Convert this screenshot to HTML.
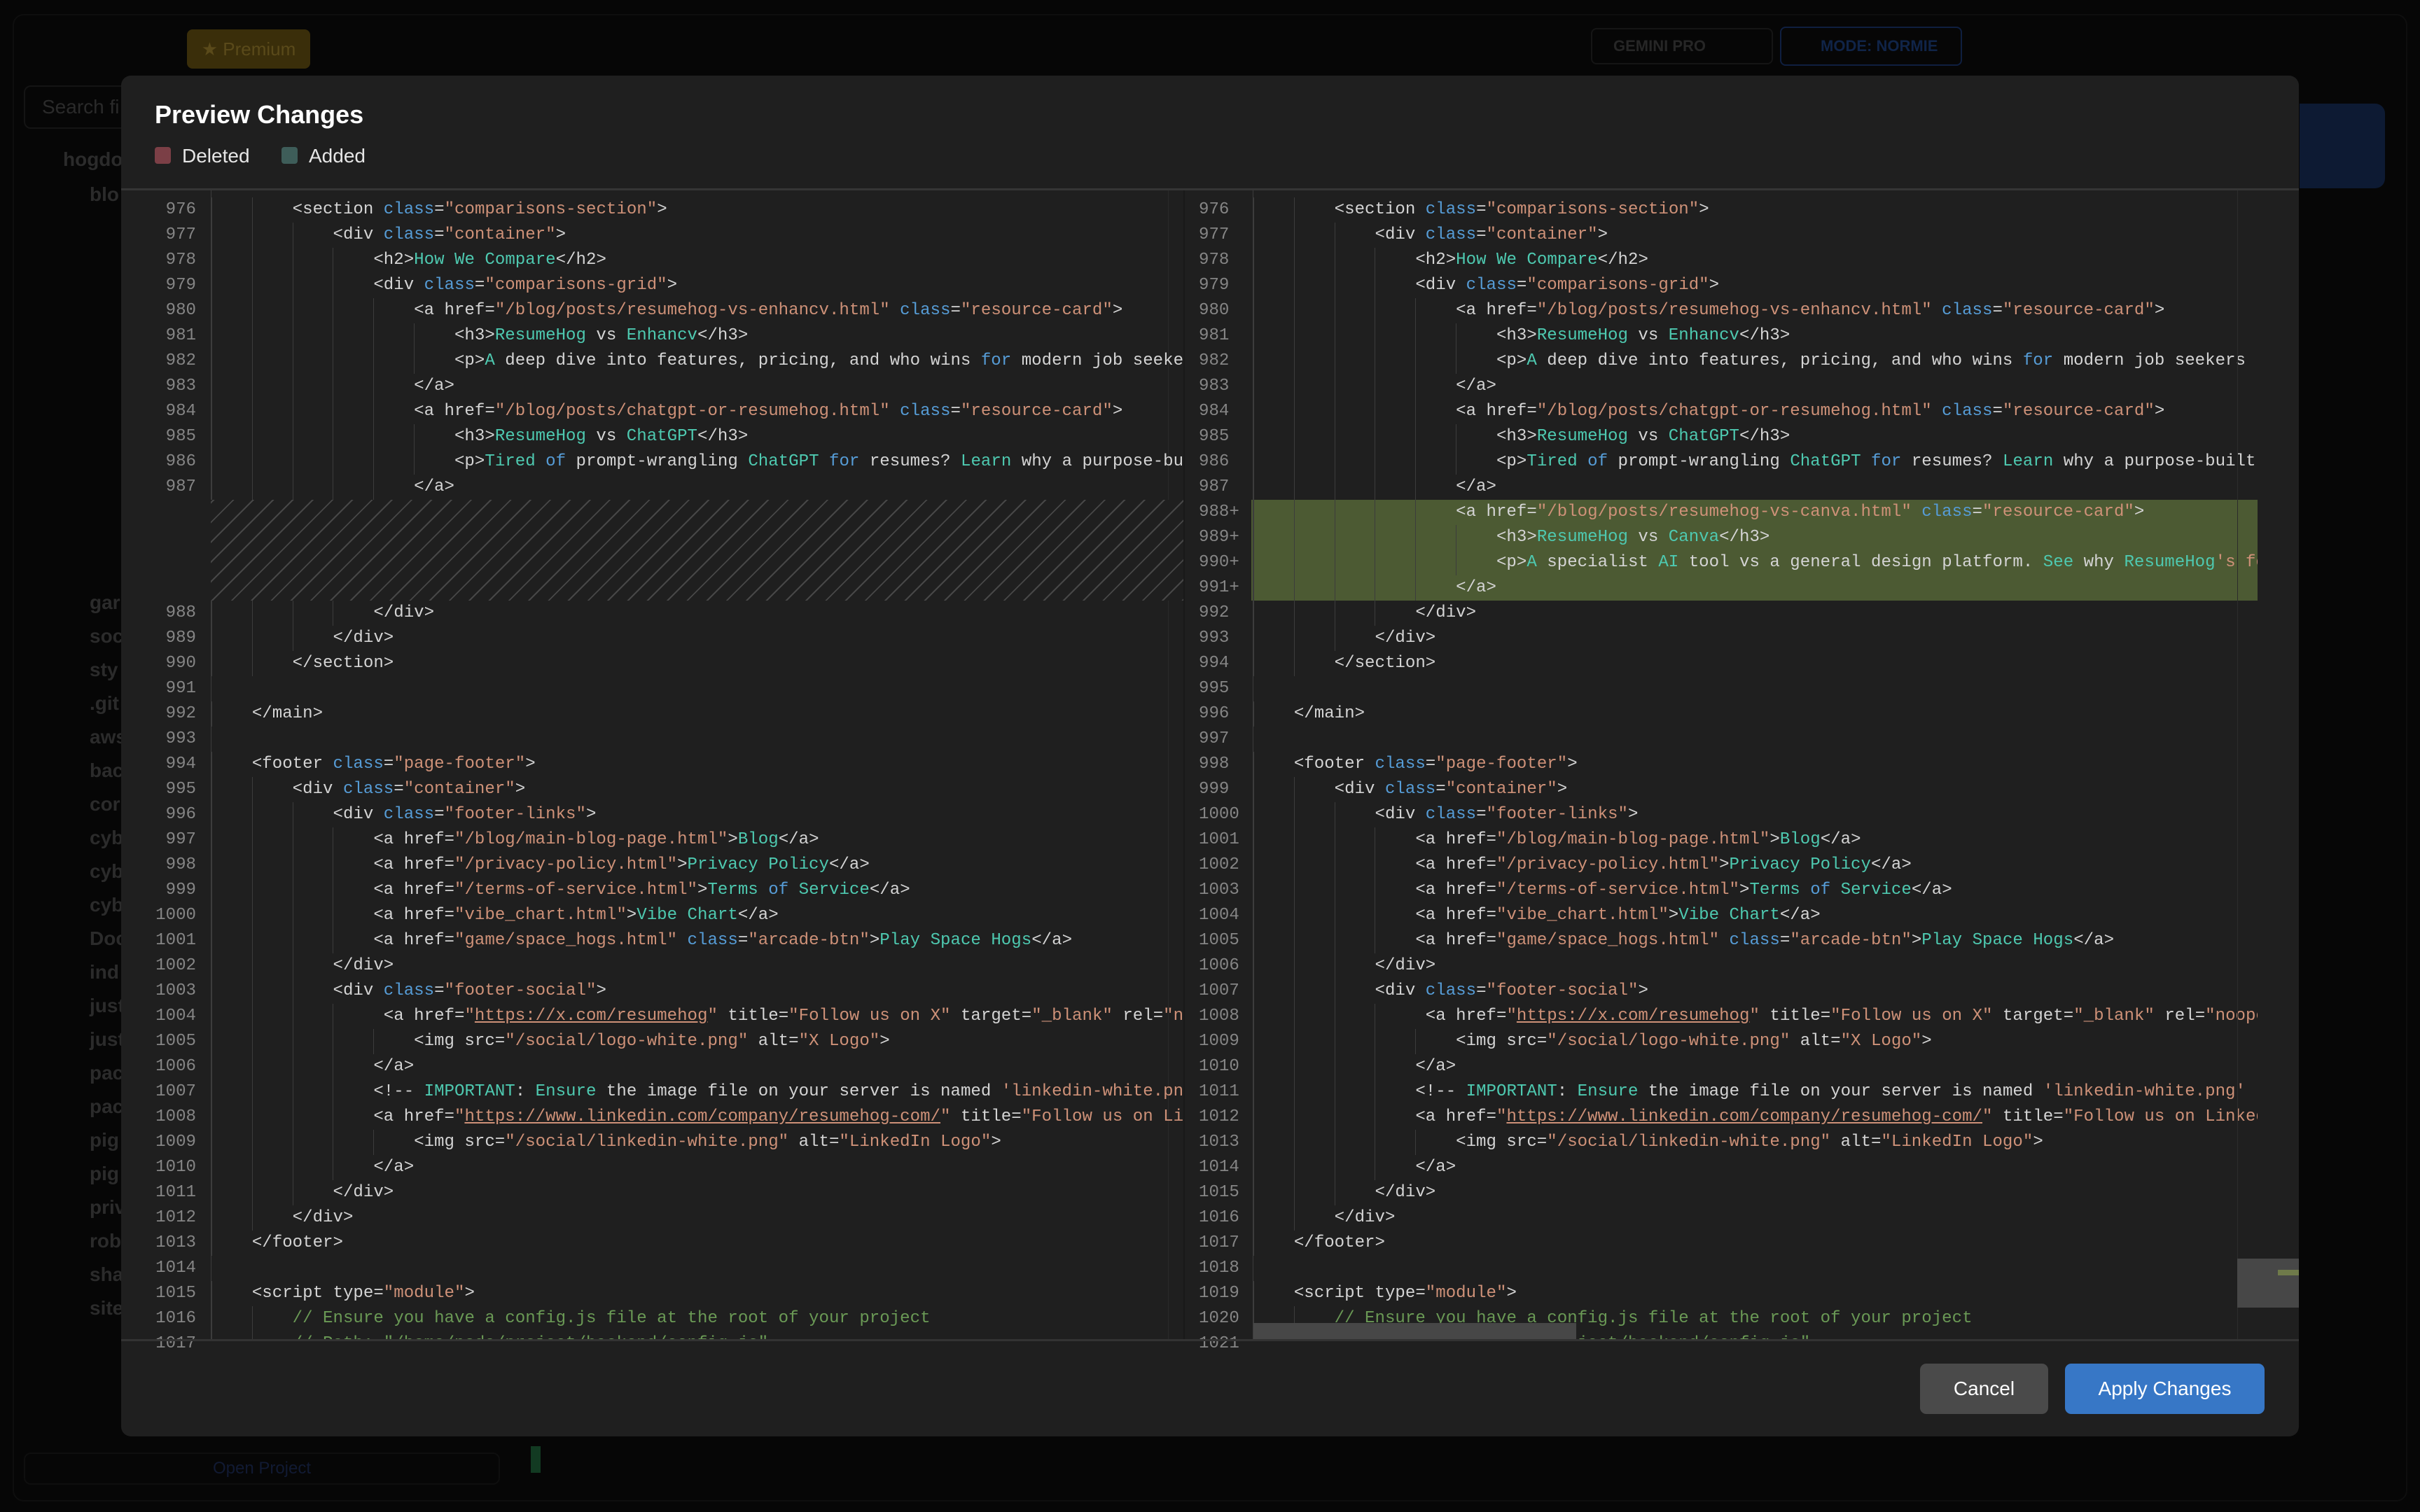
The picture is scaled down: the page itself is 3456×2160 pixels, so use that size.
<!DOCTYPE html>
<html><head><meta charset="utf-8">
<style>
*{margin:0;padding:0;box-sizing:border-box}
html,body{width:3456px;height:2160px;overflow:hidden;background:#060606;font-family:"Liberation Sans",sans-serif}
.bg{position:absolute;color:#2b2b2b;font-size:28px;font-weight:bold}
.modal{position:absolute;left:173px;top:108px;width:3110px;height:1944px;background:#1f1f1f;border-radius:14px;overflow:hidden}
.title{position:absolute;left:48px;top:35px;color:#fff;font-size:36px;font-weight:bold}
.leg{position:absolute;top:100px;font-size:28px;color:#e6e6e6;line-height:30px}
.sw{position:absolute;top:102px;width:23px;height:24px;border-radius:4px}
.hb{position:absolute;left:0;top:161px;width:3110px;height:3px;background:#353535}
.code{position:absolute;font-family:"Liberation Mono",monospace;font-size:24.1px;color:#d4d4d4;overflow:hidden}
.l{height:36px;line-height:36px;white-space:pre}
.n{position:absolute;color:#858585;text-align:right;font-family:"Liberation Mono",monospace;font-size:24.1px}
.i{display:inline-block;width:4ch;height:36px;vertical-align:top;box-shadow:inset 1px 0 0 #3c3c3c}
.k{color:#569cd6}.s{color:#ce9178}.g{color:#4ec9b0}.c{color:#6a9955}
u{text-decoration:underline}
.btn{position:absolute;top:1840px;height:72px;border-radius:9px;color:#fff;font-size:28px;text-align:center;line-height:72px}
</style></head><body>
<div style="position:absolute;left:18px;top:20px;width:3420px;height:2125px;border:2px solid #0e0e0e;border-radius:16px"></div>
<div style="position:absolute;left:267px;top:42px;width:176px;height:56px;background:#3a2e0a;border-radius:8px;color:#5a4a1a;font-size:26px;line-height:56px;text-align:center">★ Premium</div>
<div style="position:absolute;left:34px;top:122px;width:300px;height:62px;border:2px solid #141414;border-radius:10px;color:#2a2a2a;font-size:28px;line-height:58px;padding-left:24px">Search fi</div>
<div style="position:absolute;left:3284px;top:148px;width:122px;height:121px;background:#0d1a33;border-radius:0 14px 14px 0"></div>
<div style="position:absolute;left:2272px;top:40px;width:260px;height:52px;border:2px solid #151515;border-radius:8px;color:#262626;font-size:22px;font-weight:bold;line-height:48px;padding-left:30px">GEMINI PRO</div>
<div style="position:absolute;left:2542px;top:38px;width:260px;height:56px;border:2px solid #0f1f40;border-radius:8px;color:#102448;font-size:22px;font-weight:bold;line-height:52px;padding-left:56px">MODE: NORMIE</div>
<div class="bg" style="left:90px;top:212px">hogdo</div>
<div class="bg" style="left:128px;top:262px">blo</div>
<div class="bg" style="left:128px;top:845px">gar</div>
<div class="bg" style="left:128px;top:893px">soc</div>
<div class="bg" style="left:128px;top:941px">sty</div>
<div class="bg" style="left:128px;top:989px">.git</div>
<div class="bg" style="left:128px;top:1037px">aws</div>
<div class="bg" style="left:128px;top:1085px">bac</div>
<div class="bg" style="left:128px;top:1133px">cor</div>
<div class="bg" style="left:128px;top:1181px">cyb</div>
<div class="bg" style="left:128px;top:1229px">cyb</div>
<div class="bg" style="left:128px;top:1277px">cyb</div>
<div class="bg" style="left:128px;top:1325px">Doc</div>
<div class="bg" style="left:128px;top:1373px">ind</div>
<div class="bg" style="left:128px;top:1421px">just</div>
<div class="bg" style="left:128px;top:1469px">just</div>
<div class="bg" style="left:128px;top:1517px">pac</div>
<div class="bg" style="left:128px;top:1565px">pac</div>
<div class="bg" style="left:128px;top:1613px">pig</div>
<div class="bg" style="left:128px;top:1661px">pig</div>
<div class="bg" style="left:128px;top:1709px">priv</div>
<div class="bg" style="left:128px;top:1757px">rob</div>
<div class="bg" style="left:128px;top:1805px">sha</div>
<div class="bg" style="left:128px;top:1853px">site</div>
<div style="position:absolute;left:34px;top:2075px;width:680px;height:46px;border:2px solid #0e0e0e;border-radius:10px;color:#111a33;font-size:24px;text-align:center;line-height:42px">Open Project</div>
<div style="position:absolute;left:758px;top:2066px;width:14px;height:38px;background:#123a22"></div>

<div class="modal">
  <div class="title">Preview Changes</div>
  <div class="sw" style="left:48px;background:#7b3f46"></div>
  <div class="leg" style="left:87px">Deleted</div>
  <div class="sw" style="left:229px;background:#3e5d59"></div>
  <div class="leg" style="left:268px">Added</div>
  <div class="hb"></div>

  <!-- LEFT PANE -->
  <div style="position:absolute;left:1495px;top:164px;width:1px;height:1642px;background:#2a2a2a"></div>
  <div style="position:absolute;left:1517px;top:164px;width:2px;height:1642px;background:#191919"></div>
  <div style="position:absolute;left:128px;top:164px;width:1px;height:1642px;background:#3c3c3c"></div>
  <div style="position:absolute;left:128px;top:606px;width:1389px;height:144px;background:repeating-linear-gradient(-45deg,#474747 0 2px,#1f1f1f 2px 20px)"></div>
  <div class="n" style="left:20px;top:174px;width:87px">
<div class="l">976</div><div class="l">977</div><div class="l">978</div><div class="l">979</div><div class="l">980</div><div class="l">981</div><div class="l">982</div><div class="l">983</div><div class="l">984</div><div class="l">985</div><div class="l">986</div><div class="l">987</div><div class="l"> </div><div class="l"> </div><div class="l"> </div><div class="l"> </div><div class="l">988</div><div class="l">989</div><div class="l">990</div><div class="l">991</div><div class="l">992</div><div class="l">993</div><div class="l">994</div><div class="l">995</div><div class="l">996</div><div class="l">997</div><div class="l">998</div><div class="l">999</div><div class="l">1000</div><div class="l">1001</div><div class="l">1002</div><div class="l">1003</div><div class="l">1004</div><div class="l">1005</div><div class="l">1006</div><div class="l">1007</div><div class="l">1008</div><div class="l">1009</div><div class="l">1010</div><div class="l">1011</div><div class="l">1012</div><div class="l">1013</div><div class="l">1014</div><div class="l">1015</div><div class="l">1016</div><div class="l">1017</div>
  </div>
  <div class="code" style="left:129px;top:174px;width:1388px;height:1632px">
<div class="l"><span class="i"></span><span class="i"></span>&lt;section <span class="k">class</span>=<span class="s">"comparisons-section"</span>&gt;</div>
<div class="l"><span class="i"></span><span class="i"></span><span class="i"></span>&lt;div <span class="k">class</span>=<span class="s">"container"</span>&gt;</div>
<div class="l"><span class="i"></span><span class="i"></span><span class="i"></span><span class="i"></span>&lt;h2&gt;<span class="g">How</span> <span class="g">We</span> <span class="g">Compare</span>&lt;/h2&gt;</div>
<div class="l"><span class="i"></span><span class="i"></span><span class="i"></span><span class="i"></span>&lt;div <span class="k">class</span>=<span class="s">"comparisons-grid"</span>&gt;</div>
<div class="l"><span class="i"></span><span class="i"></span><span class="i"></span><span class="i"></span><span class="i"></span>&lt;a href=<span class="s">"/blog/posts/resumehog-vs-enhancv.html"</span> <span class="k">class</span>=<span class="s">"resource-card"</span>&gt;</div>
<div class="l"><span class="i"></span><span class="i"></span><span class="i"></span><span class="i"></span><span class="i"></span><span class="i"></span>&lt;h3&gt;<span class="g">ResumeHog</span> vs <span class="g">Enhancv</span>&lt;/h3&gt;</div>
<div class="l"><span class="i"></span><span class="i"></span><span class="i"></span><span class="i"></span><span class="i"></span><span class="i"></span>&lt;p&gt;<span class="g">A</span> deep dive into features, pricing, and who wins <span class="k">for</span> modern job seekers in 2025.&lt;/p&gt;</div>
<div class="l"><span class="i"></span><span class="i"></span><span class="i"></span><span class="i"></span><span class="i"></span>&lt;/a&gt;</div>
<div class="l"><span class="i"></span><span class="i"></span><span class="i"></span><span class="i"></span><span class="i"></span>&lt;a href=<span class="s">"/blog/posts/chatgpt-or-resumehog.html"</span> <span class="k">class</span>=<span class="s">"resource-card"</span>&gt;</div>
<div class="l"><span class="i"></span><span class="i"></span><span class="i"></span><span class="i"></span><span class="i"></span><span class="i"></span>&lt;h3&gt;<span class="g">ResumeHog</span> vs <span class="g">ChatGPT</span>&lt;/h3&gt;</div>
<div class="l"><span class="i"></span><span class="i"></span><span class="i"></span><span class="i"></span><span class="i"></span><span class="i"></span>&lt;p&gt;<span class="g">Tired</span> <span class="k">of</span> prompt-wrangling <span class="g">ChatGPT</span> <span class="k">for</span> resumes? <span class="g">Learn</span> why a purpose-built tool wins.&lt;/p&gt;</div>
<div class="l"><span class="i"></span><span class="i"></span><span class="i"></span><span class="i"></span><span class="i"></span>&lt;/a&gt;</div>
<div class="l"> </div><div class="l"> </div><div class="l"> </div><div class="l"> </div>
<div class="l"><span class="i"></span><span class="i"></span><span class="i"></span><span class="i"></span>&lt;/div&gt;</div>
<div class="l"><span class="i"></span><span class="i"></span><span class="i"></span>&lt;/div&gt;</div>
<div class="l"><span class="i"></span><span class="i"></span>&lt;/section&gt;</div>
<div class="l"> </div>
<div class="l"><span class="i"></span>&lt;/main&gt;</div>
<div class="l"> </div>
<div class="l"><span class="i"></span>&lt;footer <span class="k">class</span>=<span class="s">"page-footer"</span>&gt;</div>
<div class="l"><span class="i"></span><span class="i"></span>&lt;div <span class="k">class</span>=<span class="s">"container"</span>&gt;</div>
<div class="l"><span class="i"></span><span class="i"></span><span class="i"></span>&lt;div <span class="k">class</span>=<span class="s">"footer-links"</span>&gt;</div>
<div class="l"><span class="i"></span><span class="i"></span><span class="i"></span><span class="i"></span>&lt;a href=<span class="s">"/blog/main-blog-page.html"</span>&gt;<span class="g">Blog</span>&lt;/a&gt;</div>
<div class="l"><span class="i"></span><span class="i"></span><span class="i"></span><span class="i"></span>&lt;a href=<span class="s">"/privacy-policy.html"</span>&gt;<span class="g">Privacy Policy</span>&lt;/a&gt;</div>
<div class="l"><span class="i"></span><span class="i"></span><span class="i"></span><span class="i"></span>&lt;a href=<span class="s">"/terms-of-service.html"</span>&gt;<span class="g">Terms</span> <span class="k">of</span> <span class="g">Service</span>&lt;/a&gt;</div>
<div class="l"><span class="i"></span><span class="i"></span><span class="i"></span><span class="i"></span>&lt;a href=<span class="s">"vibe_chart.html"</span>&gt;<span class="g">Vibe Chart</span>&lt;/a&gt;</div>
<div class="l"><span class="i"></span><span class="i"></span><span class="i"></span><span class="i"></span>&lt;a href=<span class="s">"game/space_hogs.html"</span> <span class="k">class</span>=<span class="s">"arcade-btn"</span>&gt;<span class="g">Play Space Hogs</span>&lt;/a&gt;</div>
<div class="l"><span class="i"></span><span class="i"></span><span class="i"></span>&lt;/div&gt;</div>
<div class="l"><span class="i"></span><span class="i"></span><span class="i"></span>&lt;div <span class="k">class</span>=<span class="s">"footer-social"</span>&gt;</div>
<div class="l"><span class="i"></span><span class="i"></span><span class="i"></span><span class="i"></span> &lt;a href=<span class="s">"<u>https://x.com/resumehog</u>"</span> title=<span class="s">"Follow us on X"</span> target=<span class="s">"_blank"</span> rel=<span class="s">"noopener noreferrer"</span>&gt;</div>
<div class="l"><span class="i"></span><span class="i"></span><span class="i"></span><span class="i"></span><span class="i"></span>&lt;img src=<span class="s">"/social/logo-white.png"</span> alt=<span class="s">"X Logo"</span>&gt;</div>
<div class="l"><span class="i"></span><span class="i"></span><span class="i"></span><span class="i"></span>&lt;/a&gt;</div>
<div class="l"><span class="i"></span><span class="i"></span><span class="i"></span><span class="i"></span>&lt;!-- <span class="g">IMPORTANT</span>: <span class="g">Ensure</span> the image file on your server is named <span class="s">'linkedin-white.png'</span> --&gt;</div>
<div class="l"><span class="i"></span><span class="i"></span><span class="i"></span><span class="i"></span>&lt;a href=<span class="s">"<u>https://www.linkedin.com/company/resumehog-com/</u>"</span> title=<span class="s">"Follow us on LinkedIn"</span> target=<span class="s">"_blank"</span>&gt;</div>
<div class="l"><span class="i"></span><span class="i"></span><span class="i"></span><span class="i"></span><span class="i"></span>&lt;img src=<span class="s">"/social/linkedin-white.png"</span> alt=<span class="s">"LinkedIn Logo"</span>&gt;</div>
<div class="l"><span class="i"></span><span class="i"></span><span class="i"></span><span class="i"></span>&lt;/a&gt;</div>
<div class="l"><span class="i"></span><span class="i"></span><span class="i"></span>&lt;/div&gt;</div>
<div class="l"><span class="i"></span><span class="i"></span>&lt;/div&gt;</div>
<div class="l"><span class="i"></span>&lt;/footer&gt;</div>
<div class="l"> </div>
<div class="l"><span class="i"></span>&lt;script type=<span class="s">"module"</span>&gt;</div>
<div class="l"><span class="i"></span><span class="i"></span><span class="c">// Ensure you have a config.js file at the root of your project</span></div>
<div class="l"><span class="i"></span><span class="i"></span><span class="c">// Path: "/home/node/project/backend/config.js"</span></div>
  </div>

  <!-- RIGHT PANE -->
  <div style="position:absolute;left:1614px;top:606px;width:1437px;height:144px;background:#4c5a33"></div>
  <div style="position:absolute;left:1616px;top:164px;width:1px;height:1642px;background:#3c3c3c"></div>
  <div class="n" style="left:1539px;top:174px;width:100px;text-align:left">
<div class="l">976</div><div class="l">977</div><div class="l">978</div><div class="l">979</div><div class="l">980</div><div class="l">981</div><div class="l">982</div><div class="l">983</div><div class="l">984</div><div class="l">985</div><div class="l">986</div><div class="l">987</div><div class="l">988+</div><div class="l">989+</div><div class="l">990+</div><div class="l">991+</div><div class="l">992</div><div class="l">993</div><div class="l">994</div><div class="l">995</div><div class="l">996</div><div class="l">997</div><div class="l">998</div><div class="l">999</div><div class="l">1000</div><div class="l">1001</div><div class="l">1002</div><div class="l">1003</div><div class="l">1004</div><div class="l">1005</div><div class="l">1006</div><div class="l">1007</div><div class="l">1008</div><div class="l">1009</div><div class="l">1010</div><div class="l">1011</div><div class="l">1012</div><div class="l">1013</div><div class="l">1014</div><div class="l">1015</div><div class="l">1016</div><div class="l">1017</div><div class="l">1018</div><div class="l">1019</div><div class="l">1020</div><div class="l">1021</div>
  </div>
  <div class="code" style="left:1617px;top:174px;width:1434px;height:1632px">
<div class="l"><span class="i"></span><span class="i"></span>&lt;section <span class="k">class</span>=<span class="s">"comparisons-section"</span>&gt;</div>
<div class="l"><span class="i"></span><span class="i"></span><span class="i"></span>&lt;div <span class="k">class</span>=<span class="s">"container"</span>&gt;</div>
<div class="l"><span class="i"></span><span class="i"></span><span class="i"></span><span class="i"></span>&lt;h2&gt;<span class="g">How</span> <span class="g">We</span> <span class="g">Compare</span>&lt;/h2&gt;</div>
<div class="l"><span class="i"></span><span class="i"></span><span class="i"></span><span class="i"></span>&lt;div <span class="k">class</span>=<span class="s">"comparisons-grid"</span>&gt;</div>
<div class="l"><span class="i"></span><span class="i"></span><span class="i"></span><span class="i"></span><span class="i"></span>&lt;a href=<span class="s">"/blog/posts/resumehog-vs-enhancv.html"</span> <span class="k">class</span>=<span class="s">"resource-card"</span>&gt;</div>
<div class="l"><span class="i"></span><span class="i"></span><span class="i"></span><span class="i"></span><span class="i"></span><span class="i"></span>&lt;h3&gt;<span class="g">ResumeHog</span> vs <span class="g">Enhancv</span>&lt;/h3&gt;</div>
<div class="l"><span class="i"></span><span class="i"></span><span class="i"></span><span class="i"></span><span class="i"></span><span class="i"></span>&lt;p&gt;<span class="g">A</span> deep dive into features, pricing, and who wins <span class="k">for</span> modern job seekers `in 2025.&lt;/p&gt;</div>
<div class="l"><span class="i"></span><span class="i"></span><span class="i"></span><span class="i"></span><span class="i"></span>&lt;/a&gt;</div>
<div class="l"><span class="i"></span><span class="i"></span><span class="i"></span><span class="i"></span><span class="i"></span>&lt;a href=<span class="s">"/blog/posts/chatgpt-or-resumehog.html"</span> <span class="k">class</span>=<span class="s">"resource-card"</span>&gt;</div>
<div class="l"><span class="i"></span><span class="i"></span><span class="i"></span><span class="i"></span><span class="i"></span><span class="i"></span>&lt;h3&gt;<span class="g">ResumeHog</span> vs <span class="g">ChatGPT</span>&lt;/h3&gt;</div>
<div class="l"><span class="i"></span><span class="i"></span><span class="i"></span><span class="i"></span><span class="i"></span><span class="i"></span>&lt;p&gt;<span class="g">Tired</span> <span class="k">of</span> prompt-wrangling <span class="g">ChatGPT</span> <span class="k">for</span> resumes? <span class="g">Learn</span> why a purpose-built tool wins.&lt;/p&gt;</div>
<div class="l"><span class="i"></span><span class="i"></span><span class="i"></span><span class="i"></span><span class="i"></span>&lt;/a&gt;</div>
<div class="l"><span class="i"></span><span class="i"></span><span class="i"></span><span class="i"></span><span class="i"></span>&lt;a href=<span class="s">"/blog/posts/resumehog-vs-canva.html"</span> <span class="k">class</span>=<span class="s">"resource-card"</span>&gt;</div>
<div class="l"><span class="i"></span><span class="i"></span><span class="i"></span><span class="i"></span><span class="i"></span><span class="i"></span>&lt;h3&gt;<span class="g">ResumeHog</span> vs <span class="g">Canva</span>&lt;/h3&gt;</div>
<div class="l"><span class="i"></span><span class="i"></span><span class="i"></span><span class="i"></span><span class="i"></span><span class="i"></span>&lt;p&gt;<span class="g">A</span> specialist <span class="g">AI</span> tool vs a general design platform. <span class="g">See</span> why <span class="g">ResumeHog</span><span class="s">'s focus wins.</span>&lt;/p&gt;</div>
<div class="l"><span class="i"></span><span class="i"></span><span class="i"></span><span class="i"></span><span class="i"></span>&lt;/a&gt;</div>
<div class="l"><span class="i"></span><span class="i"></span><span class="i"></span><span class="i"></span>&lt;/div&gt;</div>
<div class="l"><span class="i"></span><span class="i"></span><span class="i"></span>&lt;/div&gt;</div>
<div class="l"><span class="i"></span><span class="i"></span>&lt;/section&gt;</div>
<div class="l"> </div>
<div class="l"><span class="i"></span>&lt;/main&gt;</div>
<div class="l"> </div>
<div class="l"><span class="i"></span>&lt;footer <span class="k">class</span>=<span class="s">"page-footer"</span>&gt;</div>
<div class="l"><span class="i"></span><span class="i"></span>&lt;div <span class="k">class</span>=<span class="s">"container"</span>&gt;</div>
<div class="l"><span class="i"></span><span class="i"></span><span class="i"></span>&lt;div <span class="k">class</span>=<span class="s">"footer-links"</span>&gt;</div>
<div class="l"><span class="i"></span><span class="i"></span><span class="i"></span><span class="i"></span>&lt;a href=<span class="s">"/blog/main-blog-page.html"</span>&gt;<span class="g">Blog</span>&lt;/a&gt;</div>
<div class="l"><span class="i"></span><span class="i"></span><span class="i"></span><span class="i"></span>&lt;a href=<span class="s">"/privacy-policy.html"</span>&gt;<span class="g">Privacy Policy</span>&lt;/a&gt;</div>
<div class="l"><span class="i"></span><span class="i"></span><span class="i"></span><span class="i"></span>&lt;a href=<span class="s">"/terms-of-service.html"</span>&gt;<span class="g">Terms</span> <span class="k">of</span> <span class="g">Service</span>&lt;/a&gt;</div>
<div class="l"><span class="i"></span><span class="i"></span><span class="i"></span><span class="i"></span>&lt;a href=<span class="s">"vibe_chart.html"</span>&gt;<span class="g">Vibe Chart</span>&lt;/a&gt;</div>
<div class="l"><span class="i"></span><span class="i"></span><span class="i"></span><span class="i"></span>&lt;a href=<span class="s">"game/space_hogs.html"</span> <span class="k">class</span>=<span class="s">"arcade-btn"</span>&gt;<span class="g">Play Space Hogs</span>&lt;/a&gt;</div>
<div class="l"><span class="i"></span><span class="i"></span><span class="i"></span>&lt;/div&gt;</div>
<div class="l"><span class="i"></span><span class="i"></span><span class="i"></span>&lt;div <span class="k">class</span>=<span class="s">"footer-social"</span>&gt;</div>
<div class="l"><span class="i"></span><span class="i"></span><span class="i"></span><span class="i"></span> &lt;a href=<span class="s">"<u>https://x.com/resumehog</u>"</span> title=<span class="s">"Follow us on X"</span> target=<span class="s">"_blank"</span> rel=<span class="s">"noopener noreferrer"</span>&gt;</div>
<div class="l"><span class="i"></span><span class="i"></span><span class="i"></span><span class="i"></span><span class="i"></span>&lt;img src=<span class="s">"/social/logo-white.png"</span> alt=<span class="s">"X Logo"</span>&gt;</div>
<div class="l"><span class="i"></span><span class="i"></span><span class="i"></span><span class="i"></span>&lt;/a&gt;</div>
<div class="l"><span class="i"></span><span class="i"></span><span class="i"></span><span class="i"></span>&lt;!-- <span class="g">IMPORTANT</span>: <span class="g">Ensure</span> the image file on your server is named <span class="s">'linkedin-white.png'</span> --&gt;</div>
<div class="l"><span class="i"></span><span class="i"></span><span class="i"></span><span class="i"></span>&lt;a href=<span class="s">"<u>https://www.linkedin.com/company/resumehog-com/</u>"</span> title=<span class="s">"Follow us on LinkedIn"</span> target=<span class="s">"_blank"</span>&gt;</div>
<div class="l"><span class="i"></span><span class="i"></span><span class="i"></span><span class="i"></span><span class="i"></span>&lt;img src=<span class="s">"/social/linkedin-white.png"</span> alt=<span class="s">"LinkedIn Logo"</span>&gt;</div>
<div class="l"><span class="i"></span><span class="i"></span><span class="i"></span><span class="i"></span>&lt;/a&gt;</div>
<div class="l"><span class="i"></span><span class="i"></span><span class="i"></span>&lt;/div&gt;</div>
<div class="l"><span class="i"></span><span class="i"></span>&lt;/div&gt;</div>
<div class="l"><span class="i"></span>&lt;/footer&gt;</div>
<div class="l"> </div>
<div class="l"><span class="i"></span>&lt;script type=<span class="s">"module"</span>&gt;</div>
<div class="l"><span class="i"></span><span class="i"></span><span class="c">// Ensure you have a config.js file at the root of your project</span></div>
<div class="l"><span class="i"></span><span class="i"></span><span class="c">// Path: "/home/node/project/backend/config.js"</span></div>
  </div>
  <div style="position:absolute;left:1617px;top:1782px;width:461px;height:24px;background:#474747"></div>
  <div style="position:absolute;left:3022px;top:164px;width:1px;height:1642px;background:#2c2c2c"></div>
  <div style="position:absolute;left:3022px;top:1690px;width:88px;height:70px;background:#474747"></div>
  <div style="position:absolute;left:3080px;top:1706px;width:30px;height:8px;background:#6f7a4a"></div>
  <div style="position:absolute;left:0;top:1805px;width:3110px;height:3px;background:#333"></div>

  <div class="btn" style="left:2569px;width:183px;background:#4a4a4a">Cancel</div>
  <div class="btn" style="left:2776px;width:285px;background:#3777c6">Apply Changes</div>
</div>
</body></html>
